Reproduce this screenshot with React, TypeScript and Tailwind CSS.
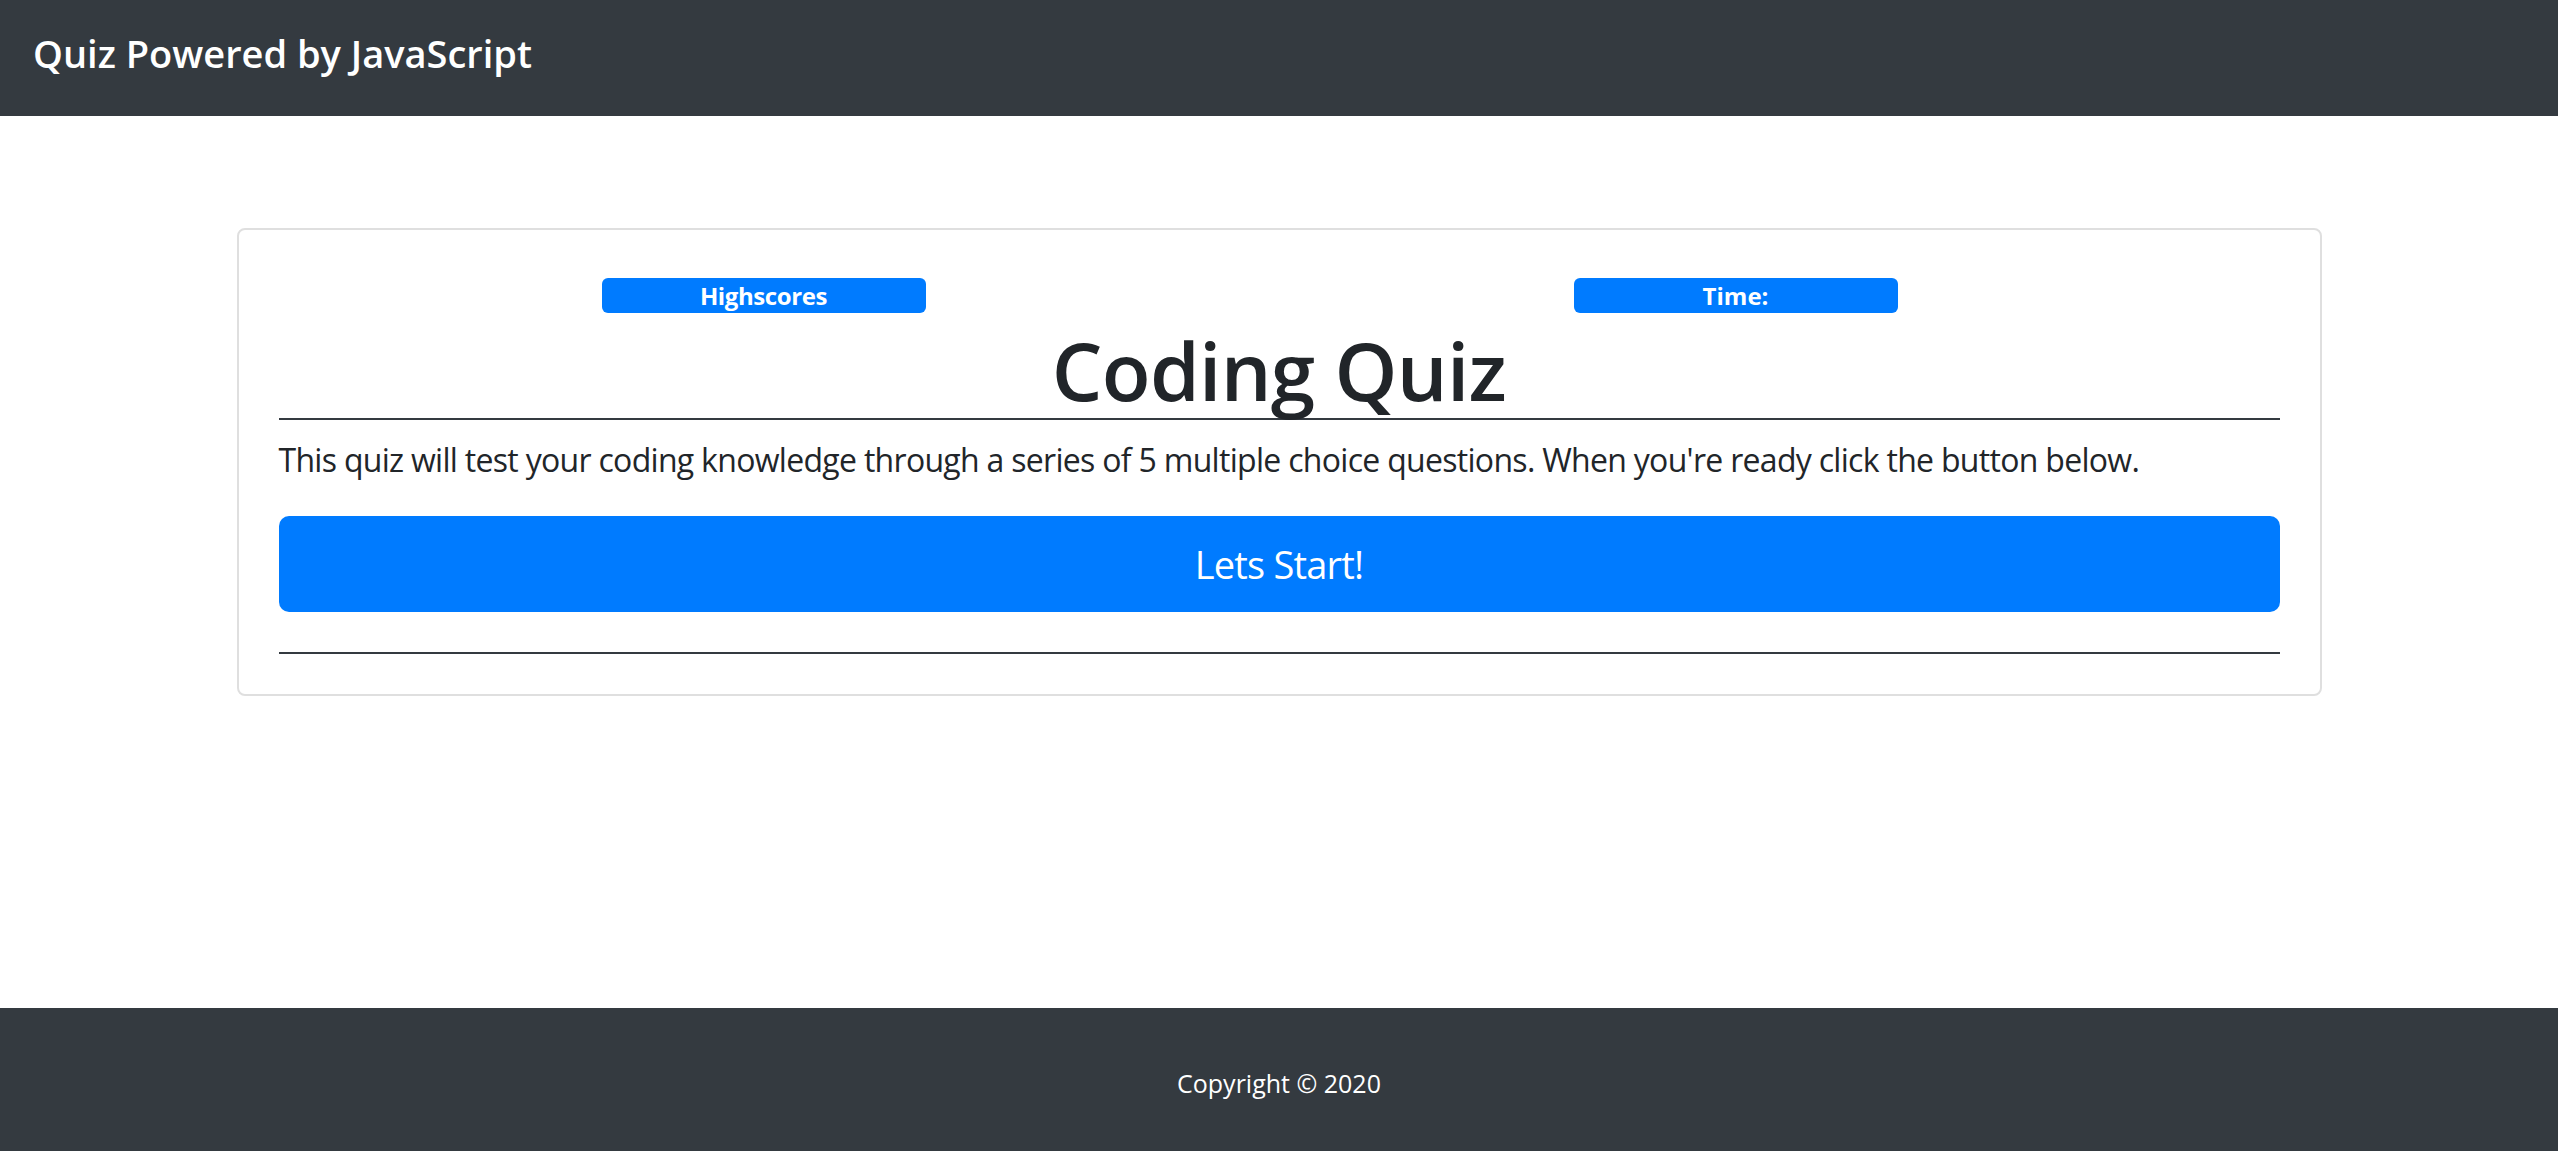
import React from "react";

const FONT = "font-['Segoe_UI','Open_Sans',Roboto,sans-serif]";

export default function App() {
  return (
    <div className={`min-h-screen flex flex-col bg-white ${FONT}`}>
      {/* navbar */}
      <header className="h-[116px] bg-[#343a40] flex items-center px-[33px] pb-[10px]">
        <span className="text-[38px] font-semibold text-white leading-none">Quiz Powered by JavaScript</span>
      </header>

      <main className="flex-1 pt-[112px]">
        <div className="mx-auto w-[2085px] border-2 border-[#dfdfdf] rounded-[8px] p-[40px] text-[#212529]">
          {/* top buttons */}
          <div className="flex pt-[8px] pl-[323px] gap-[648px]">
            <button className="w-[324px] h-[35px] rounded-[6px] bg-[#007bff] text-white text-[24px] font-bold leading-none tracking-[-0.4px]">
              Highscores
            </button>
            <button className="w-[324px] h-[35px] rounded-[6px] bg-[#007bff] text-white text-[24px] font-bold leading-none">
              Time:
            </button>
          </div>

          <h1 className="mt-[9px] text-center text-[80px] leading-[96px] font-semibold tracking-[-0.7px]">Coding Quiz</h1>
          <hr className="border-0 h-[2px] bg-[#343a40]" />

          <p className="mt-[16px] text-[32px] leading-[48px] tracking-[-0.7px]">
            This quiz will test your coding knowledge through a series of 5 multiple choice questions. When you're ready click the button below.
          </p>

          <button className="mt-[32px] w-full h-[96px] rounded-[10px] bg-[#007bff] text-white text-[38px] tracking-[-0.8px]">
            Lets Start!
          </button>

          <hr className="mt-[40px] border-0 h-[2px] bg-[#343a40]" />
        </div>
      </main>

      {/* footer */}
      <footer className="h-[143px] bg-[#343a40] flex items-center justify-center pt-[8px]">
        <span className="text-[25px] text-white">Copyright © 2020</span>
      </footer>
    </div>
  );
}
